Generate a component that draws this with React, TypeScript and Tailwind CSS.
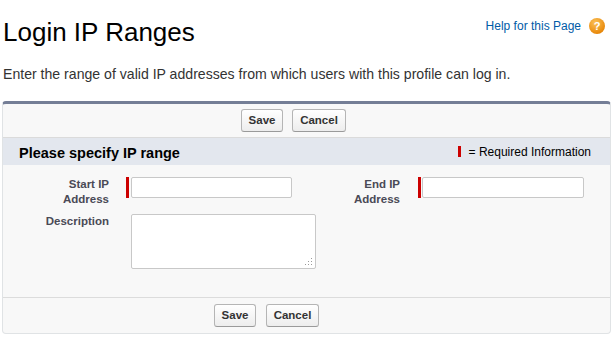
import React from "react";

const Btn = ({ label, w }: { label: string; w: string }) => (
  <button
    type="button"
    className={`${w} h-[23px] rounded-[3px] border border-[#b5b5b5] border-b-[#9a9a9a] bg-gradient-to-b from-white to-[#ededed] text-[11.5px] font-bold text-[#333] leading-none`}
  >
    {label}
  </button>
);

const ReqBar = ({ className }: { className: string }) => (
  <div className={`w-[3px] h-[21px] bg-[#c00] shrink-0 ${className}`} />
);

export default function App() {
  return (
    <div className="w-[612px] h-[348px] overflow-hidden bg-white font-['Liberation_Sans',Arial,sans-serif] text-[#000]">
      <div className="flex justify-between items-start">
        <h1 className="mt-[17px] pl-[3px] text-[26px] leading-[30px] font-normal">Login IP Ranges</h1>
        <a href="#" className="mt-[18px] mr-[7px] flex items-center gap-[8px] text-[12px] leading-[16px] text-[#015ba7]">
          <span>Help for this Page</span>
          <span className="w-[16px] h-[16px] rounded-full bg-[radial-gradient(circle_at_40%_30%,#fbc25a,#e98a0c_70%,#d17400)] flex items-center justify-center text-white text-[11px] font-bold leading-none">
            ?
          </span>
        </a>
      </div>

      <p className="mt-[18px] pl-[3px] text-[14.1px] leading-[18px] text-[#333]">
        Enter the range of valid IP addresses from which users with this profile can log in.
      </p>

      <div className="mt-[18px] ml-[2px] mr-[1px] rounded-[4px] border border-[#e0e3e5] border-t-[3px] border-t-[#747e96] bg-[#f8f8f8]">
        {/* top buttons */}
        <div className="h-[34px] pt-[5px] pl-[238px] flex gap-[9px] border-b border-[#dbdbdb]">
          <Btn label="Save" w="w-[42px]" />
          <Btn label="Cancel" w="w-[54px]" />
        </div>

        {/* section header */}
        <div className="h-[27px] bg-[#e3e7ee] flex items-center justify-between pl-[16px] pr-[19px]">
          <h3 className="mt-[3px] text-[14.5px] font-bold text-[#000] leading-none">Please specify IP range</h3>
          <div className="flex items-center gap-[8px] text-[12px] text-[#000]">
            <span className="w-[3px] h-[11px] bg-[#c00]" />
            <span>= Required Information</span>
          </div>
        </div>

        {/* form */}
        <div className="pt-[12px] pb-[28px] border-b border-[#dcdcdc]">
          <div className="flex items-start">
            <label className="w-[106px] text-right text-[11.5px] font-bold leading-[15px] text-[#4a4a56]">
              Start IP
              <br />
              Address
            </label>
            <ReqBar className="ml-[17px]" />
            <input className="ml-[2px] w-[161px] h-[21px] bg-white border border-[#c8c8c8] rounded-[2px] outline-none" />
            <label className="w-[108px] text-right text-[11.5px] font-bold leading-[15px] text-[#4a4a56]">
              End IP
              <br />
              Address
            </label>
            <ReqBar className="ml-[18px]" />
            <input className="ml-[1px] w-[162px] h-[21px] bg-white border border-[#c8c8c8] rounded-[2px] outline-none" />
          </div>

          <div className="flex items-start mt-[7px]">
            <label className="w-[106px] text-right text-[11.5px] font-bold leading-[15px] text-[#4a4a56]">
              Description
            </label>
            <div className="relative ml-[22px]">
              <textarea className="block w-[185px] h-[55px] bg-white border border-[#c8c8c8] rounded-[2px] resize-none outline-none" />
              <svg className="absolute right-[3px] bottom-[3px]" width="9" height="9" viewBox="0 0 9 9">
                <rect x="7" y="1" width="1" height="1" fill="#9a9a9a" />
                <rect x="4" y="4" width="1" height="1" fill="#9a9a9a" />
                <rect x="7" y="4" width="1" height="1" fill="#9a9a9a" />
                <rect x="1" y="7" width="1" height="1" fill="#9a9a9a" />
                <rect x="4" y="7" width="1" height="1" fill="#9a9a9a" />
                <rect x="7" y="7" width="1" height="1" fill="#9a9a9a" />
              </svg>
            </div>
          </div>
        </div>

        {/* bottom buttons */}
        <div className="pt-[6px] pb-[6px] pl-[211px] flex gap-[10px]">
          <Btn label="Save" w="w-[42px]" />
          <Btn label="Cancel" w="w-[53px]" />
        </div>
      </div>
    </div>
  );
}
